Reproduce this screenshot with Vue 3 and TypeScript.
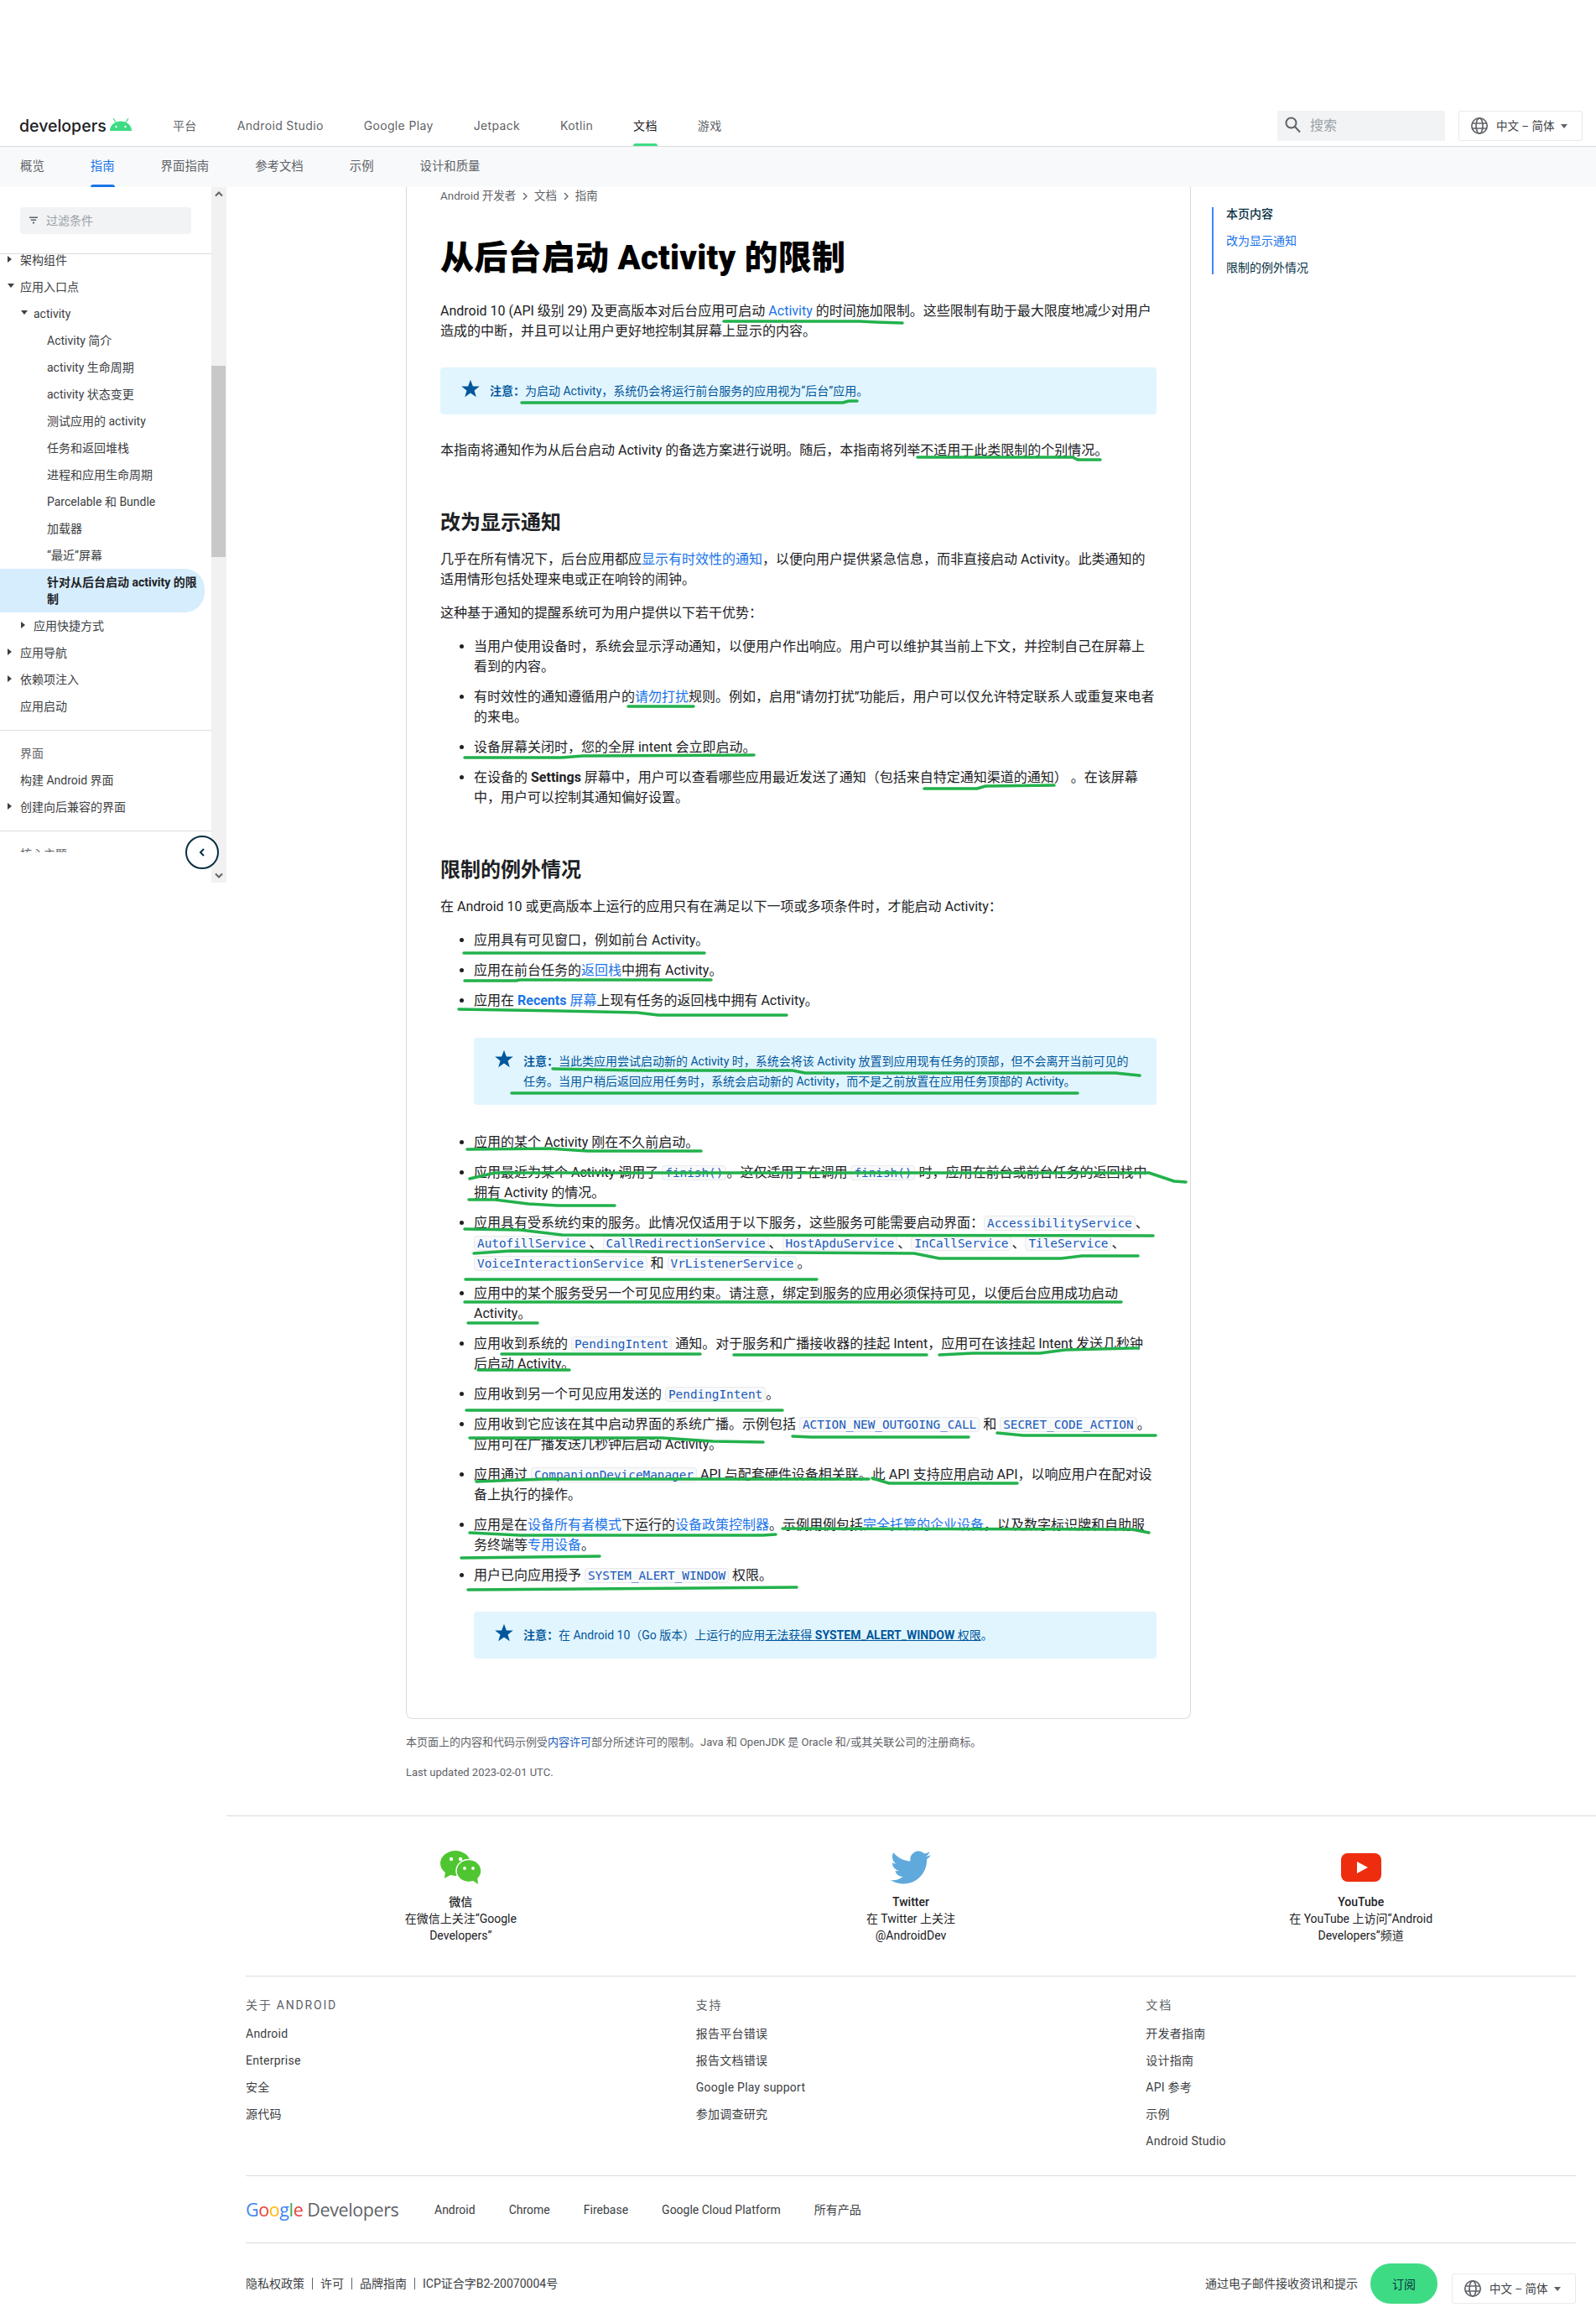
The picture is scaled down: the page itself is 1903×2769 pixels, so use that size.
<script setup lang="ts">
interface NavRow { label: string; level: number; arrow?: 'right' | 'down'; active?: boolean; muted?: boolean }

const topNav = ['平台', 'Android Studio', 'Google Play', 'Jetpack', 'Kotlin', '文档', '游戏']
const subNav = ['概览', '指南', '界面指南', '参考文档', '示例', '设计和质量']

const groupA: NavRow[] = [
  { label: '架构组件', level: 0, arrow: 'right' },
  { label: '应用入口点', level: 0, arrow: 'down' },
  { label: 'activity', level: 1, arrow: 'down' },
  { label: 'Activity 简介', level: 2 },
  { label: 'activity 生命周期', level: 2 },
  { label: 'activity 状态变更', level: 2 },
  { label: '测试应用的 activity', level: 2 },
  { label: '任务和返回堆栈', level: 2 },
  { label: '进程和应用生命周期', level: 2 },
  { label: 'Parcelable 和 Bundle', level: 2 },
  { label: '加载器', level: 2 },
  { label: '“最近”屏幕', level: 2 },
  { label: '针对从后台启动 activity 的限制', level: 2, active: true },
  { label: '应用快捷方式', level: 1, arrow: 'right' },
  { label: '应用导航', level: 0, arrow: 'right' },
  { label: '依赖项注入', level: 0, arrow: 'right' },
  { label: '应用启动', level: 0 }
]
const groupB: NavRow[] = [
  { label: '界面', level: 0, muted: true },
  { label: '构建 Android 界面', level: 0 },
  { label: '创建向后兼容的界面', level: 0, arrow: 'right' }
]

const marks: string[] = [
  '863,383 1025,383 1045,384 1076,385',
  '622,480 1005,480 1012,478 1022,478',
  '1094,545 1279,545 1285,548 1312,548',
  '749,842 827,842',
  '554,903 670,903 695,901 899,900',
  '1102,940 1165,940 1175,937 1257,936',
  '553,1136 840,1136',
  '554,1169 615,1169 620,1168 848,1168',
  '547,1203 667,1205 760,1207 785,1210 938,1210',
  '659,1274 770,1276 945,1276 960,1279 1330,1279 1359,1282',
  '610,1303 1285,1303',
  '557,1370 655,1369 700,1372 836,1372',
  '560,1405 590,1398 1320,1398 1370,1398 1400,1408 1414,1409',
  '559,1430 590,1430 630,1435 665,1437 733,1437',
  '554,1465 620,1466 670,1472 1375,1473',
  '565,1494 610,1491 1090,1494 1120,1500 1180,1500 1265,1500 1290,1497 1357,1497',
  '555,1525 974,1525',
  '554,1552 1337,1552',
  '558,1577 641,1577',
  '598,1614 835,1614',
  '875,1615 1105,1615',
  '1120,1615 1160,1613 1240,1613 1270,1609 1350,1607 1357,1607',
  '570,1633 679,1633',
  '556,1681 933,1681',
  '560,1714 790,1714 850,1718 910,1719',
  '945,1712 967,1713 1155,1713',
  '1189,1708 1220,1711 1378,1711',
  '568,1766 650,1763 1036,1763',
  '1040,1762 1060,1768 1213,1768',
  '560,1827 620,1830 910,1830 925,1829',
  '933,1822 1350,1823 1370,1827',
  '550,1857 715,1855',
  '558,1895 830,1893 950,1892'
]

const footCols = [
  { title: '关于 ANDROID', items: ['Android', 'Enterprise', '安全', '源代码'] },
  { title: '支持', items: ['报告平台错误', '报告文档错误', 'Google Play support', '参加调查研究'] },
  { title: '文档', items: ['开发者指南', '设计指南', 'API 参考', '示例', 'Android Studio'] }
]
const productLinks = ['Android', 'Chrome', 'Firebase', 'Google Cloud Platform', '所有产品']
const legal = ['隐私权政策', '许可', '品牌指南', 'ICP证合字B2-20070004号']
</script>

<template>
  <div class="page">
    <header class="top">
      <div class="logo">
        <span class="logo-word">developers</span>
        <svg width="26" height="15" viewBox="0 0 26 15">
          <path d="M0 15 A13 11.5 0 0 1 26 15 Z" fill="#3ddc84" />
          <path d="M7 5 L4 0 M19 5 L22 0" stroke="#3ddc84" stroke-width="1.2" />
          <circle cx="7.5" cy="10" r="1.2" fill="#fff" />
          <circle cx="18.5" cy="10" r="1.2" fill="#fff" />
        </svg>
      </div>
      <nav class="top-nav">
        <a v-for="n in topNav" :key="n" class="top-link" :class="{ on: n === '文档' }">{{ n }}</a>
      </nav>
      <div class="search">
        <svg width="24" height="24" viewBox="0 0 24 24" fill="none" stroke="#5f6368" stroke-width="2">
          <circle cx="9.5" cy="8.5" r="6" />
          <path d="M14 13 L20 19.5" />
        </svg>
        <span>搜索</span>
      </div>
      <div class="lang">
        <svg width="24" height="24" viewBox="0 0 24 24" fill="none" stroke="#5f6368" stroke-width="1.7">
          <circle cx="12" cy="12" r="9.2" />
          <ellipse cx="12" cy="12" rx="4" ry="9.2" />
          <path d="M3 9 H21 M3 15 H21" />
        </svg>
        <span>中文 – 简体</span>
        <i class="caret"></i>
      </div>
    </header>

    <div class="sub">
      <a v-for="n in subNav" :key="n" class="sub-link" :class="{ on: n === '指南' }">{{ n }}</a>
    </div>

    <div class="body">
      <aside class="side">
        <div class="side-main">
          <div class="filter-wrap">
            <div class="filter">
              <svg width="12" height="12" viewBox="0 0 12 12" fill="#5f6368">
                <path d="M1 1.5 H11 V3 H1 Z M2.8 4.6 H9.2 V6.1 H2.8 Z M5 7.6 H7 V9.4 H5 Z" />
              </svg>
              <span>过滤条件</span>
            </div>
          </div>
          <div class="tree">
            <div class="tree-in">
              <div
                v-for="r in groupA"
                :key="r.label"
                class="row"
                :class="['lv' + r.level, { active: r.active }]"
              >
                <span class="arr" :class="r.arrow"></span>
                <span>{{ r.label }}</span>
              </div>
              <div class="tree-line"></div>
              <div
                v-for="r in groupB"
                :key="r.label"
                class="row"
                :class="['lv' + r.level, { muted: r.muted }]"
              >
                <span class="arr" :class="r.arrow"></span>
                <span>{{ r.label }}</span>
              </div>
              <div class="tree-line"></div>
              <div class="row lv0 muted"><span class="arr"></span><span>核心主题</span></div>
            </div>
            <div class="fade"></div>
          </div>
        </div>
        <div class="track">
          <svg class="chev" width="12" height="8" viewBox="0 0 12 8" fill="none" stroke="#5f6368" stroke-width="2">
            <path d="M2 6.5 L6 2.5 L10 6.5" />
          </svg>
          <div class="thumb"></div>
          <svg class="chev down" width="12" height="8" viewBox="0 0 12 8" fill="none" stroke="#5f6368" stroke-width="2">
            <path d="M2 1.5 L6 5.5 L10 1.5" />
          </svg>
        </div>
        <button class="collapse" aria-label="收起">
          <svg width="12" height="12" viewBox="0 0 12 12" fill="none" stroke="#073042" stroke-width="2">
            <path d="M8 2 L4 6 L8 10" />
          </svg>
        </button>
      </aside>

      <div class="main">
        <div class="doc-row">
          <article class="card">
            <div class="crumbs">
              <span>Android 开发者</span>
              <svg width="8" height="12" viewBox="0 0 8 12" fill="none" stroke="#5f6368" stroke-width="1.3"><path d="M2 2 L6 6 L2 10" /></svg>
              <span>文档</span>
              <svg width="8" height="12" viewBox="0 0 8 12" fill="none" stroke="#5f6368" stroke-width="1.3"><path d="M2 2 L6 6 L2 10" /></svg>
              <span>指南</span>
            </div>
            <h1>从后台启动 Activity 的限制</h1>
            <p class="intro">Android 10 (API 级别 29) 及更高版本对后台应用可启动 <a>Activity</a> 的时间施加限制。这些限制有助于最大限度地减少对用户造成的中断，并且可以让用户更好地控制其屏幕上显示的内容。</p>

            <div class="note first">
              <svg class="star" width="24" height="24" viewBox="0 0 24 24" fill="#01579b"><path d="M12 1.8 L14.9 9.4 L22.8 9.4 L16.5 14.4 L18.8 22.2 L12 17.6 L5.2 22.2 L7.5 14.4 L1.2 9.4 L9.1 9.4 Z" /></svg>
              <div><b>注意：</b>为启动 Activity，系统仍会将运行前台服务的应用视为“后台”应用。</div>
            </div>

            <p class="after-note">本指南将通知作为从后台启动 Activity 的备选方案进行说明。随后，本指南将列举不适用于此类限制的个别情况。</p>

            <h2>改为显示通知</h2>
            <p>几乎在所有情况下，后台应用都应<a>显示有时效性的通知</a>，以便向用户提供紧急信息，而非直接启动 Activity。此类通知的适用情形包括处理来电或正在响铃的闹钟。</p>
            <p>这种基于通知的提醒系统可为用户提供以下若干优势：</p>
            <ul>
              <li>当用户使用设备时，系统会显示浮动通知，以便用户作出响应。用户可以维护其当前上下文，并控制自己在屏幕上看到的内容。</li>
              <li>有时效性的通知遵循用户的<a>请勿打扰</a>规则。例如，启用“请勿打扰”功能后，用户可以仅允许特定联系人或重复来电者的来电。</li>
              <li>设备屏幕关闭时，您的全屏 intent 会立即启动。</li>
              <li>在设备的 <b>Settings</b> 屏幕中，用户可以查看哪些应用最近发送了通知（包括来自特定通知渠道的通知） 。在该屏幕中，用户可以控制其通知偏好设置。</li>
            </ul>

            <h2>限制的例外情况</h2>
            <p>在 Android 10 或更高版本上运行的应用只有在满足以下一项或多项条件时，才能启动 Activity：</p>
            <ul>
              <li>应用具有可见窗口，例如前台 Activity。</li>
              <li>应用在前台任务的<a>返回栈</a>中拥有 Activity。</li>
              <li>应用在 <a><b>Recents</b> 屏幕</a>上现有任务的返回栈中拥有 Activity。</li>
            </ul>

            <div class="note nested">
              <svg class="star" width="24" height="24" viewBox="0 0 24 24" fill="#01579b"><path d="M12 1.8 L14.9 9.4 L22.8 9.4 L16.5 14.4 L18.8 22.2 L12 17.6 L5.2 22.2 L7.5 14.4 L1.2 9.4 L9.1 9.4 Z" /></svg>
              <div><b>注意：</b>当此类应用尝试启动新的 Activity 时，系统会将该 Activity 放置到应用现有任务的顶部，但不会离开当前可见的任务。当用户稍后返回应用任务时，系统会启动新的 Activity，而不是之前放置在应用任务顶部的 Activity。</div>
            </div>

            <ul class="after-nested">
              <li>应用的某个 Activity 刚在不久前启动。</li>
              <li>应用最近为某个 Activity 调用了 <code>finish()</code>。这仅适用于在调用 <code>finish()</code> 时，应用在前台或前台任务的返回栈中拥有 Activity 的情况。</li>
              <li>应用具有受系统约束的服务。此情况仅适用于以下服务，这些服务可能需要启动界面：<code>AccessibilityService</code>、<code>AutofillService</code>、<code>CallRedirectionService</code>、<code>HostApduService</code>、<code>InCallService</code>、<code>TileService</code>、<code>VoiceInteractionService</code> 和 <code>VrListenerService</code>。</li>
              <li>应用中的某个服务受另一个可见应用约束。请注意，绑定到服务的应用必须保持可见，以便后台应用成功启动 Activity。</li>
              <li>应用收到系统的 <code>PendingIntent</code> 通知。对于服务和广播接收器的挂起 Intent，应用可在该挂起 Intent 发送几秒钟后启动 Activity。</li>
              <li>应用收到另一个可见应用发送的 <code>PendingIntent</code>。</li>
              <li>应用收到它应该在其中启动界面的系统广播。示例包括 <code>ACTION_NEW_OUTGOING_CALL</code> 和 <code>SECRET_CODE_ACTION</code>。应用可在广播发送几秒钟后启动 Activity。</li>
              <li>应用通过 <code>CompanionDeviceManager</code> API 与配套硬件设备相关联。此 API 支持应用启动 API，以响应用户在配对设备上执行的操作。</li>
              <li>应用是在<a>设备所有者模式</a>下运行的<a>设备政策控制器</a>。示例用例包括<a>完全托管的企业设备</a>，以及数字标识牌和自助服务终端等<a>专用设备</a>。</li>
              <li>用户已向应用授予 <code>SYSTEM_ALERT_WINDOW</code> 权限。</li>
            </ul>

            <div class="note nested last">
              <svg class="star" width="24" height="24" viewBox="0 0 24 24" fill="#01579b"><path d="M12 1.8 L14.9 9.4 L22.8 9.4 L16.5 14.4 L18.8 22.2 L12 17.6 L5.2 22.2 L7.5 14.4 L1.2 9.4 L9.1 9.4 Z" /></svg>
              <div><b>注意：</b>在 Android 10（Go 版本）上运行的应用<u>无法获得 <b>SYSTEM_ALERT_WINDOW</b> 权限</u>。</div>
            </div>
          </article>

          <aside class="toc">
            <div class="toc-title">本页内容</div>
            <a class="toc-on">改为显示通知</a>
            <a>限制的例外情况</a>
          </aside>
        </div>

        <div class="fine">
          <p>本页面上的内容和代码示例受<a>内容许可</a>部分所述许可的限制。Java 和 OpenJDK 是 Oracle 和/或其关联公司的注册商标。</p>
          <p>Last updated 2023-02-01 UTC.</p>
        </div>

        <footer class="foot">
          <section class="social">
            <div class="soc">
              <svg width="49" height="40" viewBox="0 0 49 40">
                <ellipse cx="18" cy="15" rx="18" ry="15" fill="#4fc631" />
                <path d="M6 25 L5 33 L14 28 Z" fill="#4fc631" />
                <ellipse cx="34" cy="24" rx="15" ry="13.5" fill="#4fc631" stroke="#fff" stroke-width="1.5" />
                <path d="M38 35 L45 40 L44 31 Z" fill="#4fc631" />
                <circle cx="13" cy="10" r="2.2" fill="#fff" />
                <circle cx="24" cy="10" r="2.2" fill="#fff" />
                <circle cx="29" cy="21" r="1.9" fill="#fff" />
                <circle cx="39" cy="21" r="1.9" fill="#fff" />
              </svg>
              <strong>微信</strong>
              <span>在微信上关注“Google Developers”</span>
            </div>
            <div class="soc">
              <svg width="48" height="40" viewBox="0 0 24 20" preserveAspectRatio="none">
                <path fill="#5fa9dd" d="M23.953 2.57a10 10 0 01-2.825.775 4.958 4.958 0 002.163-2.723c-.951.555-2.005.959-3.127 1.184a4.92 4.92 0 00-8.384 4.482C7.69 6.095 4.067 4.13 1.64 1.162a4.822 4.822 0 00-.666 2.475c0 1.71.87 3.213 2.188 4.096a4.904 4.904 0 01-2.228-.616v.06a4.923 4.923 0 003.946 4.827 4.996 4.996 0 01-2.212.085 4.936 4.936 0 004.604 3.417 9.867 9.867 0 01-6.102 2.105c-.39 0-.779-.023-1.17-.067a13.995 13.995 0 007.557 2.209c9.053 0 13.998-7.496 13.998-13.985 0-.21 0-.42-.015-.63A9.935 9.935 0 0024 2.59z" />
              </svg>
              <strong>Twitter</strong>
              <span>在 Twitter 上关注 @AndroidDev</span>
            </div>
            <div class="soc">
              <svg width="48" height="40" viewBox="0 0 48 40">
                <rect x="0" y="3" width="48" height="34" rx="8" fill="#ee2d0f" />
                <path d="M19 13 L32 20 L19 27 Z" fill="#fff" />
              </svg>
              <strong>YouTube</strong>
              <span>在 YouTube 上访问“Android Developers”频道</span>
            </div>
          </section>

          <section class="cols">
            <div v-for="c in footCols" :key="c.title" class="col">
              <div class="col-title">{{ c.title }}</div>
              <a v-for="i in c.items" :key="i" class="col-link">{{ i }}</a>
            </div>
          </section>

          <section class="products">
            <div class="gd">
              <span class="g-b">G</span><span class="g-r">o</span><span class="g-y">o</span><span class="g-b">g</span><span class="g-g">l</span><span class="g-r">e</span>
              <span class="gd-word">Developers</span>
            </div>
            <a v-for="p in productLinks" :key="p">{{ p }}</a>
          </section>

          <section class="legal">
            <div class="legal-left">
              <template v-for="(l, i) in legal" :key="l">
                <i v-if="i" class="pipe"></i>
                <a>{{ l }}</a>
              </template>
            </div>
            <div class="legal-right">
              <span>通过电子邮件接收资讯和提示</span>
              <button class="sub-btn">订阅</button>
              <div class="lang foot-lang">
                <svg width="24" height="24" viewBox="0 0 24 24" fill="none" stroke="#5f6368" stroke-width="1.7">
                  <circle cx="12" cy="12" r="9.2" />
                  <ellipse cx="12" cy="12" rx="4" ry="9.2" />
                  <path d="M3 9 H21 M3 15 H21" />
                </svg>
                <span>中文 – 简体</span>
                <i class="caret"></i>
              </div>
            </div>
          </section>
        </footer>
      </div>
    </div>

    <svg class="marks" width="1903" height="2769" viewBox="0 0 1903 2769" fill="none" stroke="#22b14c" stroke-width="3.5" stroke-linecap="round" stroke-linejoin="round">
      <polyline v-for="m in marks" :key="m" :points="m" />
    </svg>
  </div>
</template>

<style>
body { margin: 0; background: #fff; }
</style>

<style scoped>
.page {
  position: relative;
  width: 1903px;
  height: 2769px;
  overflow: hidden;
  background: #fff;
  color: #202124;
  font-family: Roboto, "Noto Sans CJK SC", sans-serif;
  font-size: 16px;
  line-height: 24px;
}
a { color: inherit; text-decoration: none; }
.top {
  display: flex;
  align-items: center;
  height: 48px;
  padding: 126px 16px 0 23px;
  border-bottom: 1px solid #dadce0;
}
.logo { display: flex; align-items: center; gap: 4px; width: 183px; }
.logo-word { font: 500 19.5px/24px Inter, "Noto Sans CJK SC", sans-serif; color: #202124; }
.logo svg { margin-top: -3px; }
.top-nav { display: flex; gap: 48px; flex: 1; height: 100%; }
.top-link {
  position: relative;
  font: 14px/48px Inter, "Noto Sans CJK SC", sans-serif;
  letter-spacing: .35px;
  color: #5f6368;
}
.top-link.on { color: #202124; }
.top-link.on::after {
  content: "";
  position: absolute;
  left: 0; right: 0; bottom: 0;
  height: 3px;
  background: #3ddc84;
  border-radius: 3px 3px 0 0;
}
.search {
  display: flex;
  align-items: center;
  gap: 8px;
  box-sizing: border-box;
  width: 200px;
  height: 36px;
  padding-left: 7px;
  margin-right: 16px;
  background: #f1f3f4;
  border-radius: 2px;
  color: #9aa0a6;
}
.lang {
  display: flex;
  align-items: center;
  gap: 8px;
  box-sizing: border-box;
  width: 148px;
  height: 36px;
  padding-left: 12px;
  border: 1px solid #e8eaed;
  border-radius: 2px;
  font-size: 13.5px;
  color: #3c4043;
}
.caret {
  width: 0; height: 0;
  margin-left: -1px;
  border-left: 4.5px solid transparent;
  border-right: 4.5px solid transparent;
  border-top: 5px solid #5f6368;
}
.sub {
  display: flex;
  gap: 55px;
  height: 48px;
  padding-left: 24px;
  background: #f8f9fa;
}
.sub-link { position: relative; font-size: 14.4px; line-height: 48px; color: #5f6368; }
.sub-link.on { color: #1a73e8; }
.sub-link.on::after {
  content: "";
  position: absolute;
  left: 0; right: 0; bottom: 0;
  height: 3px;
  background: #1a73e8;
  border-radius: 3px 3px 0 0;
}
.body { display: flex; align-items: flex-start; }

.side { position: relative; display: flex; width: 270px; height: 829px; flex: none; }
.side-main { display: flex; flex-direction: column; width: 252px; }
.filter-wrap { height: 80px; box-sizing: border-box; padding: 24px 24px 0; border-bottom: 1px solid #dadce0; }
.filter {
  display: flex;
  align-items: center;
  gap: 9px;
  height: 32px;
  padding-left: 10px;
  background: #f1f3f4;
  border-radius: 4px;
  font-size: 14px;
  color: #9aa0a6;
}
.tree { position: relative; flex: 1; overflow: hidden; }
.tree-in { margin-top: -9px; }
.row {
  display: flex;
  box-sizing: border-box;
  width: 244px;
  padding: 6px 8px 6px 8px;
  font-size: 14px;
  line-height: 20px;
  color: #3c4043;
}
.row.lv1 { padding-left: 24px; }
.row.lv2 { padding-left: 40px; }
.row.muted { color: #5f6368; }
.row.active {
  background: #d6edfd;
  border-radius: 0 24px 24px 0;
  font-weight: 700;
  color: #202124;
}
.arr { position: relative; flex: none; width: 16px; height: 20px; }
.arr.right::before {
  content: "";
  position: absolute;
  left: 1px; top: 5px;
  border-left: 5px solid #3c4043;
  border-top: 4px solid transparent;
  border-bottom: 4px solid transparent;
}
.arr.down::before {
  content: "";
  position: absolute;
  left: 1px; top: 6px;
  border-top: 5px solid #3c4043;
  border-left: 4px solid transparent;
  border-right: 4px solid transparent;
}
.tree-line { height: 1px; margin: 12px 0 11px; background: #dadce0; }
.fade {
  position: absolute;
  left: 0; right: 0; bottom: 0;
  height: 36px;
  background: #fff;
}
.track {
  position: relative;
  width: 18px;
  height: 829px;
  background: #f1f1f1;
}
.chev { position: absolute; left: 3px; top: 4px; }
.chev.down { top: auto; bottom: 4px; }
.thumb {
  position: absolute;
  left: 0; top: 213px;
  width: 17px; height: 228px;
  background: #c8c8c8;
}
.collapse {
  position: absolute;
  left: 221px; top: 773px;
  display: flex;
  align-items: center;
  justify-content: center;
  width: 40px; height: 40px;
  padding: 0;
  background: #fff;
  border: 2px solid #073042;
  border-radius: 50%;
}

.main { flex: 1; min-width: 0; }
.doc-row { display: flex; align-items: flex-start; padding-left: 214px; }
.card {
  box-sizing: border-box;
  width: 936px;
  height: 1826px;
  padding: 0 40px;
  border: 1px solid #dadce0;
  border-top: 0;
  border-radius: 0 0 8px 8px;
}
.crumbs {
  display: flex;
  align-items: center;
  gap: 7px;
  height: 22px;
  font-size: 13.4px;
  color: #5f6368;
}
h1 { margin: 39px 0 27px; font-size: 40px; line-height: 48px; font-weight: 900; letter-spacing: .25px; color: #000; }
h2 { margin: 58px 0 16px; font-size: 24px; line-height: 32px; font-weight: 700; color: #202124; }
p { margin: 16px 0; }
.intro { margin: 0; }
.card a { color: #1a73e8; }
ul { margin: 16px 0 0; padding: 0 0 0 40px; }
li + li { margin-top: 12px; }
b { font-weight: 700; }
code {
  padding: 0 3px;
  font: 14.35px/20px "DejaVu Sans Mono", "Liberation Mono", monospace;
  color: #185abc;
  background: #f8f9fa;
  border: 1px solid #e8eaed;
  border-radius: 4px;
}
.note {
  display: flex;
  gap: 11px;
  padding: 16px 24px;
  background: #e1f5fe;
  border-radius: 4px;
  font-size: 14px;
  color: #01579b;
}
.note.first { margin-top: 31px; }
.note.nested { margin: 32px 0 0 40px; }
.star { flex: none; margin-top: -3px; }
.after-note { margin-top: 31px; }
.after-nested { margin-top: 33px; }
.note.last { margin-top: 31px; padding-top: 16px; padding-bottom: 16px; }
.note.last u { text-underline-offset: 1px; }

.toc {
  display: flex;
  flex-direction: column;
  margin: 24px 0 0 25px;
  padding-left: 15px;
  border-left: 2px solid #4285f4;
  font-size: 14px;
  color: #073042;
}
.toc-title, .toc a { height: 32px; line-height: 16px; }
.toc-title { font-weight: 500; height: 32px; }
.toc a:last-child { height: 16px; }
.toc .toc-on { color: #1a73e8; }

.fine { margin: 18px 0 0 214px; line-height: 20px; color: #5f6368; }
.fine p { margin: 0 0 16px; font-size: 13px; }
.fine a { color: #185abc; }

.foot { margin-top: 41px; padding: 40px 24px 0 23px; border-top: 1px solid #dadce0; }
.social { display: grid; grid-template-columns: repeat(3, 1fr); gap: 24px; height: 112px; }
.soc {
  display: flex;
  flex-direction: column;
  align-items: center;
  font-size: 14px;
  line-height: 20px;
  text-align: center;
}
.soc svg { margin: 1px 0 11px; }
.soc strong { font-weight: 500; }
.soc span { max-width: 180px; }
.cols {
  display: grid;
  grid-template-columns: repeat(3, 1fr);
  gap: 24px;
  margin-top: 38px;
  padding-top: 24px;
  height: 213px;
  border-top: 1px solid #dadce0;
  font-size: 14px;
  line-height: 20px;
  letter-spacing: .25px;
}
.col { display: flex; flex-direction: column; }
.col-title { height: 34px; color: #5f6368; letter-spacing: 1.8px; }
.col-link { height: 32px; color: #3c4043; }
.products {
  display: flex;
  align-items: center;
  gap: 40px;
  height: 79px;
  border-top: 1px solid #dadce0;
  font-size: 14px;
  color: #3c4043;
}
.gd { width: 185px; font: 21.5px/28px "Open Sans", sans-serif; letter-spacing: -.4px; white-space: nowrap; }
.g-b { color: #4285f4; } .g-r { color: #ea4335; } .g-y { color: #fbbc05; } .g-g { color: #34a853; }
.gd-word { margin-left: 5px; color: #5f6368; }
.legal {
  display: flex;
  justify-content: space-between;
  height: 96px;
  border-top: 1px solid #dadce0;
  font-size: 14px;
  color: #3c4043;
}
.legal-left { display: flex; align-items: center; gap: 9px; height: 96px; }
.pipe { width: 1px; height: 14px; background: #5f6368; }
.legal-right { display: flex; align-items: center; height: 96px; }
.sub-btn {
  width: 80px; height: 48px;
  margin: 0 17px 0 15px;
  background: #3ddc84;
  border: 0;
  border-radius: 24px;
  font: 14px Roboto, "Noto Sans CJK SC", sans-serif;
  color: #073042;
}
.foot-lang { margin-top: 12px; }
.marks { position: absolute; left: 0; top: 0; pointer-events: none; }
</style>
